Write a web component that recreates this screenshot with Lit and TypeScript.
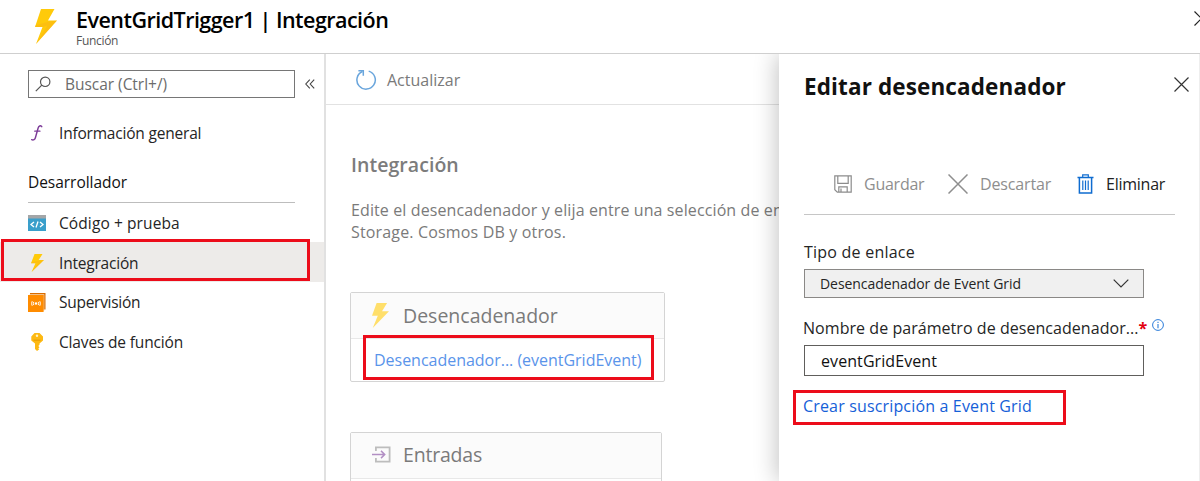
import { LitElement, html, css } from "lit";

const bolt = (w: number, h: number) => html`<svg width=${w} height=${h} viewBox="0 0 22 35" preserveAspectRatio="none">
  <path fill="#ffca0a" d="M6 0h13.5L13 11.5h9L1 35 7.5 18H0z"/>
  <path fill="#fbb117" d="M22 11.5 1 35 12.5 16.5 7.5 18H0l.6-1.8 12-3.200z" opacity=".45"/></svg>`;
const cross = (s: number, color: string, w = 1.2) => html`<svg width=${s} height=${s} viewBox="0 0 ${s} ${s}">
  <path fill="none" stroke=${color} stroke-width=${w} d="M.5.5 ${s - 0.5} ${s - 0.5}M${s - 0.5}.5.5 ${s - 0.5}"/></svg>`;

const fn = html`<svg width="14" height="18" viewBox="0 0 14 18"><g fill="none" stroke="#7d3c98" stroke-linecap="round">
  <path stroke-width="1.5" d="M11.700 2.600C10.500 1.300 8.700 1.700 8.100 4.100L5.500 13.400C5 15.600 3.300 16.600 1.700 15.700"/><path stroke-width="1.200" d="M4.700 7.200H10"/></g></svg>`;
const code = html`<svg width="18" height="16" viewBox="0 0 18 16"><rect width="18" height="16" fill="#3a9fcb"/><rect width="18" height="3.500" fill="#a3a6a8"/>
  <g fill="none" stroke="#fff" stroke-width="1.300"><path d="M6 7 3 9.500 6 12M12 7l3 2.500L12 12M10 6.500 8 12.500"/></g></svg>`;
const monitor = html`<svg width="18" height="19" viewBox="0 0 18 19"><path fill="#d96c00" d="M2 0h15.500v16.500H2z"/><path fill="#f9dcb8" d="M1.500 1.200H16.300V18H15.300V2H1.500z"/><path fill="#ff8c00" d="M0 2h15.600v17H0z"/>
  <circle cx="8" cy="10.500" r="1.200" fill="#fff"/><g fill="none" stroke="#fff" stroke-width="1"><path d="M5.800 8.900q-1 1.600 0 3.200M10.200 8.900q1 1.600 0 3.200M4.200 8.200q-1.200 2.300 0 4.600M11.800 8.200q1.200 2.300 0 4.600"/></g></svg>`;
const key = html`<svg width="12" height="18" viewBox="0 0 12 18"><path fill="#fdb913" d="M3.500 0h5L12 3.500v4L8.500 10.500v1.300L7.300 13l1.200 1.200-1.200 1.300 1 .8L6 18l-2-2v-5.500L.3 7.500v-4z"/><circle cx="6" cy="2.700" r="1.200" fill="#fff3c4"/><path d="M2.500 7.200h7" stroke="#e59a00"/></svg>`;
const search = html`<svg width="16" height="16" viewBox="0 0 16 16"><g fill="none" stroke="#555" stroke-width="1.200"><circle cx="10.200" cy="5.800" r="4.700"/><path d="M6.800 9.200.8 15.200"/></g></svg>`;
const refresh = html`<svg width="22" height="22" viewBox="0 0 22 22"><g fill="none" stroke="#69a5dc" stroke-width="1.500"><path d="M13.700 2.100A9.200 9.200 0 1 1 7.400 2.500"/><path d="M3.400 1.800H8.300V6.700"/></g></svg>`;
const inputIcon = html`<svg width="19" height="17" viewBox="0 0 19 17"><g fill="none"><path stroke="#bdbdbd" stroke-width="1.800" d="M3.900 5V1.300H17.600V15.600H3.900V12"/><path stroke="#b28fc4" stroke-width="1.500" d="M0 8.500H12.500M9 4.900l3.700 3.600L9 12.100"/></g></svg>`;
const save = html`<svg width="18" height="18" viewBox="0 0 18 18"><path fill="none" stroke="#8c8c8c" stroke-width="1.200" d="M.8.800H17.200V17.200H3.300L.8 14.700zM3.800.8V8.300H14.200V.8M4.800 17V11.800H13.200V17M7 13.500V17"/></svg>`;
const trash = html`<svg width="17" height="20" viewBox="0 0 17 20"><g fill="none" stroke="#0f6cd0"><path stroke-width="1.500" d="M.5 3.500H16.500M2.400 3.500V19H14.600V3.500"/><path stroke-width="1.200" d="M5.700 3V.9H11.300V3"/><path stroke-width="1.200" d="M5.800 6.500V16M8.500 6.500V16M11.200 6.500V16"/></g></svg>`;
const chevron = html`<svg width="16" height="9" viewBox="0 0 16 9"><path fill="none" stroke="#333" stroke-width="1.200" d="M.7.700 8 8 15.300.7"/></svg>`;
const info = html`<svg class="info" width="12" height="12" viewBox="0 0 12 12"><circle cx="6" cy="6" r="5.400" fill="none" stroke="#2b7cd9"/><path stroke="#2b7cd9" stroke-width="1.100" d="M6 5V9.200M6 2.800V4"/></svg>`;
const collapse = html`<svg width="10" height="10" viewBox="0 0 10 10"><path fill="none" stroke="#444" stroke-width="1.100" d="M4.800.6.800 5l4 4.400M9.200.6 5.200 5l4 4.400"/></svg>`;

class AppRoot extends LitElement {
  static styles = css`
    :host { display: block; position: relative; width: 1200px; height: 481px; overflow: hidden; background: #fff; color: #252525;
      font: 15.500px/22px "Open Sans", "Noto Sans", sans-serif; white-space: nowrap; }
    * { box-sizing: border-box; }
    svg { display: block; flex: none; }
    .top { height: 54px; border-bottom: 1px solid #cfcfcf; display: flex; padding: 9px 0 0 35px; overflow: hidden; }
    .names { margin-left: 19px; flex: 1; margin-top: -2px; }
    h1 { margin: 0; font-size: 21.500px; line-height: 25px; font-weight: 600; letter-spacing: -.53px; color: #000; }
    .kind { font-size: 12px; line-height: 16px; color: #555; letter-spacing: -.3px; margin-top: 1px; }
    .top > .x { margin: 2px -9px 0 0; }
    .body { display: flex; height: 427px; }
    nav { width: 326px; border-right: 2px solid #e1e1e1; padding-top: 16px; }
    .find { display: flex; align-items: center; margin-left: 28px; }
    .box { width: 267px; height: 28px; border: 1px solid #767676; display: flex; align-items: center; padding-left: 6px; margin-right: 10px; gap: 14px; color: #6c6c6c; letter-spacing: -.03px; }
    .item { height: 40px; display: flex; align-items: center; padding-left: 28px; }
    .ico { width: 18px; margin-right: 13px; display: flex; justify-content: center; }
    .first { margin-top: 15px; letter-spacing: -.2px; }
    .group { margin: 18px 0 0 28px; width: 267px; height: 32px; border-bottom: 1px solid #bdbdbd; letter-spacing: -.04px; color: #111; }
    .code { letter-spacing: .1px; }
    .on { background: #edebe9; padding-top: 2px; margin-top: -1px; letter-spacing: -.2px; }
    .sup { letter-spacing: -.28px; }
    .keys { letter-spacing: -.16px; }
    main { width: 453px; overflow: hidden; color: #7a7a7a; font-size: 16px; }
    .bar { height: 51px; border-bottom: 1px solid #e2e2e2; display: flex; align-items: center; padding: 2px 0 0 29px; gap: 10px; }
    .content { padding: 47px 0 0 24px; }
    h2 { margin: 0 0 0 1px; font-size: 19.500px; line-height: 26px; font-weight: 600; letter-spacing: .05px; color: #7c7c7c; }
    p { margin: 21px 0 49px 1px; letter-spacing: .11px; }
    .l2 { letter-spacing: .16px; }
    .card { width: 315px; height: 90px; border: 1.500px solid #d4d4d4; border-radius: 2px; margin-bottom: 50px; }
    .card.in { width: 312px; }
    .head { height: 46px; background: #fbfbfb; border-bottom: 1px solid #e8e8e8; display: flex; align-items: center; font-size: 19.500px; }
    .ci { width: 52px; padding-left: 21px; }
    .in .head { letter-spacing: -.2px; padding-bottom: 2px; }
    .link { color: #5a94ea; padding: 10px 0 0 23px; letter-spacing: -.02px; }
    aside { width: 421px; background: #fff; border-right: 1px solid #eee; box-shadow: -2px 0 22px rgba(0,0,0,.24); clip-path: inset(0 0 0 -50px); position: relative; padding: 20px 0 0 25px; font-size: 16px; }
    .title { display: flex; justify-content: space-between; padding-right: 10px; height: 26px; }
    h3 { margin: 0; font-size: 22.500px; line-height: 26px; font-weight: 700; letter-spacing: .12px; color: #111; }
    .title svg { margin-top: 3px; }
    .cmds { display: flex; align-items: center; margin-top: 54px; width: 371px; height: 61px; border-bottom: 1px solid #c6c6c6; padding-left: 30px; color: #8e8e8e; }
    .cmds svg { margin-right: 12px; }
    .save { width: 84px; letter-spacing: -.25px; }
    .cmds .discard { margin-left: 0; width: 97px; letter-spacing: -.15px; }
    .delete { color: #222; letter-spacing: -.25px; }
    .lab { height: 22px; letter-spacing: .23px; margin-top: 26px; }
    .sel { width: 340px; height: 29px; border: 1px solid #8a8886; background: #f0f0f0; display: flex; align-items: center; justify-content: space-between; padding: 0 14px 0 15px; font-size: 14px; letter-spacing: -.06px; margin-top: 6px; }
    .lab2 { display: flex; margin-top: 19px; margin-left: -1px; letter-spacing: .05px; height: 22px; }
    .star { color: #e3000f; font-weight: 700; }
    .info { margin: 2px 0 0 5px; }
    .inp { width: 340px; height: 31px; border: 1px solid #605e5c; padding: 4px 0 0 16px; margin-top: 6px; letter-spacing: .08px; color: #111; }
    .create { margin: 19px 0 0 -1px; color: #1560d8; letter-spacing: .16px; }
    .mark { position: absolute; border: 3px solid #ec0c1a; }
    .m1 { left: 1px; top: 239px; width: 309px; height: 42px; }
    .m2 { left: 363px; top: 335px; width: 291px; height: 45px; }
    .m3 { left: 793px; top: 390px; width: 273px; height: 35px; }
  `;
  render() {
    return html`
      <div class="top">${bolt(22, 35)}<div class="names"><h1>EventGridTrigger1 | Integración</h1><div class="kind">Función</div></div><div class="x">${cross(15, "#222")}</div></div>
      <div class="body">
        <nav>
          <div class="find"><div class="box">${search}<span>Buscar (Ctrl+/)</span></div>${collapse}</div>
          <div class="item first"><span class="ico">${fn}</span>Información general</div>
          <div class="group">Desarrollador</div>
          <div class="item code"><span class="ico">${code}</span>Código + prueba</div>
          <div class="item on"><span class="ico">${bolt(13, 18)}</span>Integración</div>
          <div class="item sup"><span class="ico">${monitor}</span>Supervisión</div>
          <div class="item keys"><span class="ico">${key}</span>Claves de función</div>
        </nav>
        <main>
          <div class="bar">${refresh}Actualizar</div>
          <div class="content">
            <h2>Integración</h2>
            <p>Edite el desencadenador y elija entre una selección de en<br><span class="l2">Storage. Cosmos DB y otros.</span></p>
            <div class="card"><div class="head"><span class="ci"><svg width="17" height="25" viewBox="0 0 22 35" preserveAspectRatio="none"><path fill="#ffdf6b" d="M6 0h13.500L13 11.500h9L1 35 7.500 18H0z"/></svg></span>Desencadenador</div>
              <div class="link">Desencadenador... (eventGridEvent)</div></div>
            <div class="card in"><div class="head"><span class="ci">${inputIcon}</span>Entradas</div></div>
          </div>
        </main>
        <aside>
          <div class="title"><h3>Editar desencadenador</h3>${cross(15, "#333")}</div>
          <div class="cmds">${save}<span class="save">Guardar</span>${cross(20, "#8e8e8e", 1.5)}<span class="discard">Descartar</span>${trash}<span class="delete">Eliminar</span></div>
          <div class="lab">Tipo de enlace</div>
          <div class="sel">Desencadenador de Event Grid${chevron}</div>
          <div class="lab2">Nombre de parámetro de desencadenador...<span class="star">*</span>${info}</div>
          <div class="inp">eventGridEvent</div>
          <div class="create">Crear suscripción a Event Grid</div>
        </aside>
      </div>
      <div class="mark m1"></div><div class="mark m2"></div><div class="mark m3"></div>`;
  }
}
customElements.define("app-root", AppRoot);
